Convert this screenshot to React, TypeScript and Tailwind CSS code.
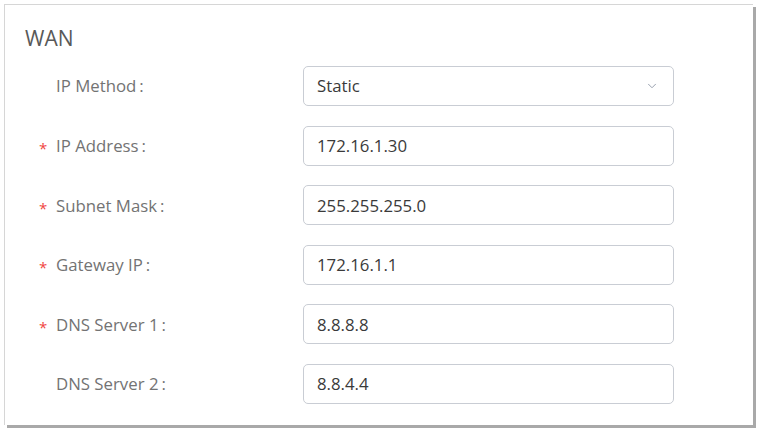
import { ChevronDown } from "lucide-react";

type Field = { label: string; value: string; required?: boolean; select?: boolean };

const fields: Field[] = [
  { label: "IP Method", value: "Static", select: true },
  { label: "IP Address", value: "172.16.1.30", required: true },
  { label: "Subnet Mask", value: "255.255.255.0", required: true },
  { label: "Gateway IP", value: "172.16.1.1", required: true },
  { label: "DNS Server 1", value: "8.8.8.8", required: true },
  { label: "DNS Server 2", value: "8.8.4.4" },
];

export default function App() {
  return (
    <div
      className="h-[431px] w-[758px] bg-white pl-[4px] pt-[4px]"
      style={{ fontFamily: '"Open Sans", "Noto Sans", sans-serif' }}
    >
      <div className="h-[421px] w-[749px] border-l border-t border-[#d6d6d6] bg-white shadow-[3px_3px_0_0_#a9a9a9]">
        <h2 className="pl-[20px] pt-[19px] text-[21px] leading-[28px] text-[#595959]">WAN</h2>
        <div className="mt-[14px] flex flex-col gap-[19.6px]">
          {fields.map((f) => (
            <div key={f.label} className="flex items-center">
              <div className="flex w-[298px] items-center pl-[34px] text-[16.8px] text-[#737373]">
                <span className="relative top-[3px] w-[17px] text-[15px] leading-none text-[#f0463f]">
                  {f.required ? "*" : ""}
                </span>
                <span>
                  {f.label}
                  <span className="ml-[3px]">:</span>
                </span>
              </div>
              <div className="flex h-[40px] w-[371px] items-center justify-between rounded-[5px] border border-[#c9cdd4] px-[13px] text-[16.8px] text-[#3a3a3a]">
                <span>{f.value}</span>
                {f.select && (
                  <ChevronDown className="mr-[1px] h-[14px] w-[14px] text-[#8a93a3]" strokeWidth={1.5} />
                )}
              </div>
            </div>
          ))}
        </div>
      </div>
    </div>
  );
}
